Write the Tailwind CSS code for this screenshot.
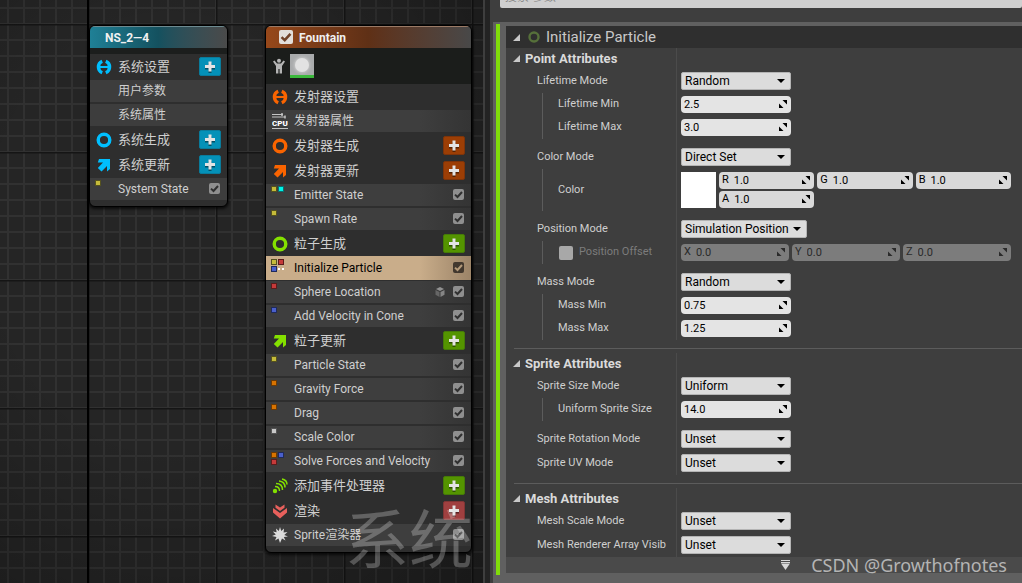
<!DOCTYPE html>
<html lang="zh-CN">
<head>
    <meta charset="UTF-8">
    <meta name="viewport" content="width=device-width, initial-scale=1.0">
    <title>Niagara - NS_2—4</title>
    <script src="https://cdn.jsdelivr.net/npm/@tailwindcss/browser@4"></script>
</head>

<body class="relative flex min-h-screen bg-[#232323] overflow-hidden font-[Roboto,'Noto_Sans_CJK_SC',sans-serif] text-xs text-[#cfcfcf]">

    <!-- Shared icons -->
    <svg class="hidden">
        <symbol id="check" viewBox="0 0 11 11"><path d="M2 5.6 4.5 8 9 3" fill="none" stroke="currentColor" stroke-width="2"/></symbol>
        <symbol id="plus" viewBox="0 0 12 12"><path d="M6 2v10M1 7h10" stroke="#000" stroke-opacity=".45" stroke-width="3"/><path d="M6 .5v10M1 5.5h10" stroke="#e4e4e4" stroke-width="3"/></symbol>
        <symbol id="settings" viewBox="0 0 16 16"><g fill="none" stroke="currentColor"><path d="M6.2 2.3A6.2 6.2 0 0 0 6.2 13.7M9.8 2.3A6.2 6.2 0 0 1 9.8 13.7" stroke-width="3.4"/><path d="M3 8h10" stroke-width="2"/></g></symbol>
        <symbol id="ring" viewBox="0 0 16 16"><circle cx="8" cy="8" r="5.8" fill="none" stroke="currentColor" stroke-width="3.4"/></symbol>
        <symbol id="arrow" viewBox="0 0 16 16"><path d="M3 2h11v10l-3 2.5V9L5.5 14.5 1.8 11 7 5.6H1.8z" fill="currentColor"/></symbol>
        <symbol id="caret" viewBox="0 0 8 4"><path d="M0 0h8L4 4z" fill="currentColor"/></symbol>
        <symbol id="spin" viewBox="0 0 9 9"><path d="M3.500 0H8v4.500zM0 3.500V8h4.500z" fill="currentColor"/></symbol>
        <symbol id="fold" viewBox="0 0 8 8"><path d="M8 0v8H0z" fill="currentColor"/></symbol>
    </svg>

    <!-- Graph canvas -->
    <main class="relative w-[483px] shrink-0 bg-[#252525] overflow-hidden">
        <svg class="absolute inset-0 w-full h-full">
            <defs>
                <pattern id="minor" width="16" height="16" patternUnits="userSpaceOnUse"><path d="M8 0v16M0 8h16" stroke="#313131" stroke-width="2"/></pattern>
                <pattern id="major" x="88" y="24" width="128" height="128" patternUnits="userSpaceOnUse"><path d="M0 0v128M0 0h128" stroke="#151515" stroke-width="3"/></pattern>
                <radialGradient id="vignette" cx=".35" cy=".4" r=".9"><stop offset=".4" stop-color="#000" stop-opacity="0"/><stop offset="1" stop-color="#000" stop-opacity=".35"/></radialGradient>
            </defs>
            <rect width="100%" height="100%" fill="url(#minor)"/>
            <rect width="100%" height="100%" fill="url(#major)"/>
            <rect x="87" width="2" height="100%" fill="#000"/>
            <rect width="100%" height="100%" fill="url(#vignette)"/>
        </svg>

        <!-- System node -->
        <section class="absolute left-[89px] top-[25px] w-[139px] rounded-md border border-black bg-[#2e2e2e] shadow-[0_1px_3px_1px_rgba(0,0,0,0.7)] overflow-hidden">
            <h2 class="h-[22px] pl-[15px] pt-px border-t border-[#6d8a90] bg-linear-to-r from-[#1f8096] via-[#14515f] to-[#4a4a4a] text-xs leading-5 font-bold text-[#f0f0f0]">NS_2—4</h2>
            <div class="h-[6px] bg-[#1c1e1d]"></div>
            <div class="flex h-[25px] items-center gap-[6px] px-[6px]">
                <svg class="size-4 text-[#00bfff]"><use href="#settings"/></svg>
                <span class="flex-1 text-[13px]">系统设置</span>
                <button aria-label="添加系统设置" class="grid h-[19px] w-[22px] place-items-center rounded-xs border border-[#0a7b9b] bg-[#0491b8]"><svg class="size-3"><use href="#plus"/></svg></button>
            </div>
            <div class="flex h-6 items-center border-y border-[#2e2e2e] bg-[#3d3d3d] pl-7">用户参数</div>
            <div class="flex h-6 items-center border-y border-[#2e2e2e] bg-[#3d3d3d] pl-7">系统属性</div>
            <div class="flex h-[25px] items-center gap-[6px] px-[6px]">
                <svg class="size-4 text-[#00bfff]"><use href="#ring"/></svg>
                <span class="flex-1 text-[13px]">系统生成</span>
                <button aria-label="添加系统生成" class="grid h-[19px] w-[22px] place-items-center rounded-xs border border-[#0a7b9b] bg-[#0491b8]"><svg class="size-3"><use href="#plus"/></svg></button>
            </div>
            <div class="flex h-[25px] items-center gap-[6px] px-[6px]">
                <svg class="size-4 text-[#00bfff]"><use href="#arrow"/></svg>
                <span class="flex-1 text-[13px]">系统更新</span>
                <button aria-label="添加系统更新" class="grid h-[19px] w-[22px] place-items-center rounded-xs border border-[#0a7b9b] bg-[#0491b8]"><svg class="size-3"><use href="#plus"/></svg></button>
            </div>
            <div class="flex h-6 items-center border-y border-[#2e2e2e] bg-[#3d3d3d] pr-[7px]">
                <span class="w-7 self-start pl-[5px] pt-[2px]"><i class="block size-[6px] border border-[#55521f] bg-[#c5bb3a]"></i></span>
                <label for="m_system" class="flex-1">System State</label>
                <span class="mb-px grid size-[11px]"><input id="m_system" type="checkbox" checked class="peer col-start-1 row-start-1 size-[11px] appearance-none rounded-xs bg-[#8f8f8f]"><svg class="pointer-events-none invisible col-start-1 row-start-1 size-[11px] text-[#303030] peer-checked:visible"><use href="#check"/></svg></span>
            </div>
            <div class="h-[5px]"></div>
        </section>

        <!-- Emitter node -->
        <section class="absolute left-[265px] top-[25px] w-[207px] rounded-md border border-black bg-[#2e2e2e] shadow-[0_1px_3px_1px_rgba(0,0,0,0.7)] overflow-hidden">
            <h2 class="flex h-[22px] items-center gap-[6px] border-t border-[#9a7a66] bg-linear-to-r from-[#97481a] via-[#5f3016] to-[#484848] pl-[13px] text-xs font-bold text-[#f0f0f0]">
                <span class="mb-px grid size-[14px]"><input id="m_fountain" type="checkbox" checked class="peer col-start-1 row-start-1 size-[14px] appearance-none rounded-xs bg-[#e2dedb]"><svg class="pointer-events-none invisible col-start-1 row-start-1 size-[14px] text-[#70422a] peer-checked:visible"><use href="#check"/></svg></span>
                <label for="m_fountain">Fountain</label>
            </h2>
            <div class="flex h-9 items-center gap-1 bg-[#1b1d1b] pl-[6px]">
                <svg class="h-4 w-[14px]" viewBox="0 0 14 16"><circle cx="7" cy="2.8" r="2" fill="#b4b4b4"/><path d="M2.500 2.500 5 5.500h4l2.500-3 1.500 1L10 8v7.500H7.600V11H6.400v4.500H4V8L1 3.500z" fill="#b4b4b4"/></svg>
                <div class="grid size-6 place-items-center border-b-[3px] border-[#3cb93c] bg-[#a9abac]"><i class="size-[14px] rounded-full bg-[#e2e2e2] shadow-[0_0_3px_1px_#c8c8c8]"></i></div>
            </div>
            <div class="flex h-[25px] items-center gap-[6px] px-[6px]">
                <svg class="size-4 text-[#fa6400]"><use href="#settings"/></svg>
                <span class="flex-1 text-[13px]">发射器设置</span>
            </div>
            <div class="flex h-6 items-center gap-[6px] border-y border-[#2e2e2e] bg-linear-to-r from-[#3e3e3e] from-75% to-[#343434] pl-[6px]">
                <svg class="size-4" viewBox="0 0 16 16"><path d="M0 1.500h11M0 4h13M0 15.500h16" stroke="#c4c4c4"/><path d="M10 0v3M13 2.500v3" stroke="#c4c4c4" stroke-width="1.500"/><text x="8" y="13" text-anchor="middle" font-size="8" font-weight="900" fill="#fff">CPU</text></svg>
                <span>发射器属性</span>
            </div>
            <div class="flex h-[25px] items-center gap-[6px] px-[6px]">
                <svg class="size-4 text-[#fa6400]"><use href="#ring"/></svg>
                <span class="flex-1 text-[13px]">发射器生成</span>
                <button aria-label="添加发射器生成" class="grid h-[19px] w-[22px] place-items-center rounded-xs border border-[#7d340a] bg-[#9c3e05]"><svg class="size-3"><use href="#plus"/></svg></button>
            </div>
            <div class="flex h-[25px] items-center gap-[6px] px-[6px]">
                <svg class="size-4 text-[#fa6400]"><use href="#arrow"/></svg>
                <span class="flex-1 text-[13px]">发射器更新</span>
                <button aria-label="添加发射器更新" class="grid h-[19px] w-[22px] place-items-center rounded-xs border border-[#7d340a] bg-[#9c3e05]"><svg class="size-3"><use href="#plus"/></svg></button>
            </div>
            <div class="flex h-6 items-center border-y border-[#2e2e2e] bg-linear-to-r from-[#3e3e3e] from-75% to-[#343434] pr-[7px]">
                <span class="flex w-7 gap-px self-start pl-[5px] pt-[2px]"><i class="size-[6px] border border-[#55521f] bg-[#c5bb3a]"></i><i class="size-[6px] border border-[#0a7070] bg-[#00f5e8]"></i></span>
                <label for="m_emitter" class="flex-1">Emitter State</label>
                <span class="mb-px grid size-[11px]"><input id="m_emitter" type="checkbox" checked class="peer col-start-1 row-start-1 size-[11px] appearance-none rounded-xs bg-[#8f8f8f]"><svg class="pointer-events-none invisible col-start-1 row-start-1 size-[11px] text-[#303030] peer-checked:visible"><use href="#check"/></svg></span>
            </div>
            <div class="flex h-6 items-center border-y border-[#2e2e2e] bg-linear-to-r from-[#3e3e3e] from-75% to-[#343434] pr-[7px]">
                <span class="w-7 self-start pl-[5px] pt-[2px]"><i class="block size-[6px] border border-[#55521f] bg-[#c5bb3a]"></i></span>
                <label for="m_spawn" class="flex-1">Spawn Rate</label>
                <span class="mb-px grid size-[11px]"><input id="m_spawn" type="checkbox" checked class="peer col-start-1 row-start-1 size-[11px] appearance-none rounded-xs bg-[#8f8f8f]"><svg class="pointer-events-none invisible col-start-1 row-start-1 size-[11px] text-[#303030] peer-checked:visible"><use href="#check"/></svg></span>
            </div>
            <div class="flex h-[25px] items-center gap-[6px] px-[6px]">
                <svg class="size-4 text-[#84e000]"><use href="#ring"/></svg>
                <span class="flex-1 text-[13px]">粒子生成</span>
                <button aria-label="添加粒子生成" class="grid h-[19px] w-[22px] place-items-center rounded-xs border border-[#457a08] bg-[#549400]"><svg class="size-3"><use href="#plus"/></svg></button>
            </div>
            <div class="flex h-6 items-center bg-linear-to-r from-[#c9ad8a] from-75% to-[#9c8468] pr-[7px] text-black">
                <span class="grid w-7 grid-cols-[6px_6px] gap-px self-start pl-[5px] pt-[3px]">
                    <i class="size-[6px] border border-[#55521f] bg-[#c5bb3a]"></i><i class="size-[6px] border border-[#5c1c1c] bg-[#c53a3a]"></i>
                    <i class="size-[6px] border border-[#1f2a5c] bg-[#4a60cc]"></i><i class="h-[2px] self-center border-t-2 border-dotted border-white"></i>
                </span>
                <label for="m_init" class="flex-1">Initialize Particle</label>
                <span class="mb-px grid size-[11px]"><input id="m_init" type="checkbox" checked class="peer col-start-1 row-start-1 size-[11px] appearance-none rounded-xs bg-[#42382e]"><svg class="pointer-events-none invisible col-start-1 row-start-1 size-[11px] text-[#b49a7a] peer-checked:visible"><use href="#check"/></svg></span>
            </div>
            <div class="flex h-6 items-center border-y border-[#2e2e2e] bg-linear-to-r from-[#3e3e3e] from-75% to-[#343434] pr-[7px]">
                <span class="w-7 self-start pl-[5px] pt-[2px]"><i class="block size-[6px] border border-[#5c1c1c] bg-[#c53a3a]"></i></span>
                <label for="m_sphere" class="flex-1">Sphere Location</label>
                <svg class="mr-2 size-[10px]" viewBox="0 0 10 10"><path d="M5 0l4 2-4 2-4-2z" fill="#929292"/><path d="M.5 3l4 2v5l-4-2.200z" fill="#666"/><path d="M9.500 3l-4 2v5l4-2.200z" fill="#858585"/></svg>
                <span class="mb-px grid size-[11px]"><input id="m_sphere" type="checkbox" checked class="peer col-start-1 row-start-1 size-[11px] appearance-none rounded-xs bg-[#8f8f8f]"><svg class="pointer-events-none invisible col-start-1 row-start-1 size-[11px] text-[#303030] peer-checked:visible"><use href="#check"/></svg></span>
            </div>
            <div class="flex h-6 items-center border-y border-[#2e2e2e] bg-linear-to-r from-[#3e3e3e] from-75% to-[#343434] pr-[7px]">
                <span class="w-7 self-start pl-[5px] pt-[2px]"><i class="block size-[6px] border border-[#1f2a5c] bg-[#4a60cc]"></i></span>
                <label for="m_velocity" class="flex-1">Add Velocity in Cone</label>
                <span class="mb-px grid size-[11px]"><input id="m_velocity" type="checkbox" checked class="peer col-start-1 row-start-1 size-[11px] appearance-none rounded-xs bg-[#8f8f8f]"><svg class="pointer-events-none invisible col-start-1 row-start-1 size-[11px] text-[#303030] peer-checked:visible"><use href="#check"/></svg></span>
            </div>
            <div class="flex h-[25px] items-center gap-[6px] px-[6px]">
                <svg class="size-4 text-[#84e000]"><use href="#arrow"/></svg>
                <span class="flex-1 text-[13px]">粒子更新</span>
                <button aria-label="添加粒子更新" class="grid h-[19px] w-[22px] place-items-center rounded-xs border border-[#457a08] bg-[#549400]"><svg class="size-3"><use href="#plus"/></svg></button>
            </div>
            <div class="flex h-6 items-center border-y border-[#2e2e2e] bg-linear-to-r from-[#3e3e3e] from-75% to-[#343434] pr-[7px]">
                <span class="w-7 self-start pl-[5px] pt-[2px]"><i class="block size-[6px] border border-[#55521f] bg-[#c5bb3a]"></i></span>
                <label for="m_particle" class="flex-1">Particle State</label>
                <span class="mb-px grid size-[11px]"><input id="m_particle" type="checkbox" checked class="peer col-start-1 row-start-1 size-[11px] appearance-none rounded-xs bg-[#8f8f8f]"><svg class="pointer-events-none invisible col-start-1 row-start-1 size-[11px] text-[#303030] peer-checked:visible"><use href="#check"/></svg></span>
            </div>
            <div class="flex h-6 items-center border-y border-[#2e2e2e] bg-linear-to-r from-[#3e3e3e] from-75% to-[#343434] pr-[7px]">
                <span class="w-7 self-start pl-[5px] pt-[2px]"><i class="block size-[6px] border border-[#6b3a05] bg-[#d87300]"></i></span>
                <label for="m_gravity" class="flex-1">Gravity Force</label>
                <span class="mb-px grid size-[11px]"><input id="m_gravity" type="checkbox" checked class="peer col-start-1 row-start-1 size-[11px] appearance-none rounded-xs bg-[#8f8f8f]"><svg class="pointer-events-none invisible col-start-1 row-start-1 size-[11px] text-[#303030] peer-checked:visible"><use href="#check"/></svg></span>
            </div>
            <div class="flex h-6 items-center border-y border-[#2e2e2e] bg-linear-to-r from-[#3e3e3e] from-75% to-[#343434] pr-[7px]">
                <span class="w-7 self-start pl-[5px] pt-[2px]"><i class="block size-[6px] border border-[#6b3a05] bg-[#d87300]"></i></span>
                <label for="m_drag" class="flex-1">Drag</label>
                <span class="mb-px grid size-[11px]"><input id="m_drag" type="checkbox" checked class="peer col-start-1 row-start-1 size-[11px] appearance-none rounded-xs bg-[#8f8f8f]"><svg class="pointer-events-none invisible col-start-1 row-start-1 size-[11px] text-[#303030] peer-checked:visible"><use href="#check"/></svg></span>
            </div>
            <div class="flex h-6 items-center border-y border-[#2e2e2e] bg-linear-to-r from-[#3e3e3e] from-75% to-[#343434] pr-[7px]">
                <span class="w-7 self-start pl-[5px] pt-[2px]"><i class="block size-[6px] border border-[#555] bg-[#c8c8c8]"></i></span>
                <label for="m_scale" class="flex-1">Scale Color</label>
                <span class="mb-px grid size-[11px]"><input id="m_scale" type="checkbox" checked class="peer col-start-1 row-start-1 size-[11px] appearance-none rounded-xs bg-[#8f8f8f]"><svg class="pointer-events-none invisible col-start-1 row-start-1 size-[11px] text-[#303030] peer-checked:visible"><use href="#check"/></svg></span>
            </div>
            <div class="flex h-6 items-center border-y border-[#2e2e2e] bg-linear-to-r from-[#3e3e3e] from-75% to-[#343434] pr-[7px]">
                <span class="grid w-7 grid-cols-[6px_6px] gap-px self-start pl-[5px] pt-[2px]">
                    <i class="size-[6px] border border-[#6b3a05] bg-[#d87300]"></i><i class="size-[6px] border border-[#1f2a5c] bg-[#4a60cc]"></i>
                    <i class="size-[6px] border border-[#5c1c1c] bg-[#c53a3a]"></i>
                </span>
                <label for="m_solve" class="flex-1">Solve Forces and Velocity</label>
                <span class="mb-px grid size-[11px]"><input id="m_solve" type="checkbox" checked class="peer col-start-1 row-start-1 size-[11px] appearance-none rounded-xs bg-[#8f8f8f]"><svg class="pointer-events-none invisible col-start-1 row-start-1 size-[11px] text-[#303030] peer-checked:visible"><use href="#check"/></svg></span>
            </div>
            <div class="flex h-[25px] items-center gap-[6px] px-[6px]">
                <svg class="size-4" viewBox="0 0 16 16"><circle cx="3" cy="13" r="2.200" fill="#84e000"/><path d="M3 8.500Q7.500 8.500 7.500 13M4 5.500Q10.500 5.500 10.500 12M7 3Q13 3.500 13 9.500M10 1Q15 2 15 6.500" fill="none" stroke="#84e000" stroke-width="1.500"/></svg>
                <span class="flex-1 text-[13px]">添加事件处理器</span>
                <button aria-label="添加事件处理器" class="grid h-[19px] w-[22px] place-items-center rounded-xs border border-[#457a08] bg-[#549400]"><svg class="size-3"><use href="#plus"/></svg></button>
            </div>
            <div class="flex h-[25px] items-center gap-[6px] px-[6px]">
                <svg class="size-4" viewBox="0 0 16 16"><path d="M1 5l7 5 7-5v4.500L8 15.500 1 9.500zM3.500 1.500 8 4.500l4.500-3v3.200L8 8 3.500 4.700z" fill="#e8605c"/></svg>
                <span class="flex-1 text-[13px]">渲染</span>
                <button aria-label="添加渲染" class="grid h-[19px] w-[22px] place-items-center rounded-xs border border-[#803535] bg-[#a04040]"><svg class="size-3"><use href="#plus"/></svg></button>
            </div>
            <div class="flex h-6 items-center gap-[6px] border-y border-[#2e2e2e] bg-linear-to-r from-[#3e3e3e] from-75% to-[#343434] pl-[6px] pr-[7px]">
                <svg class="size-4" viewBox="0 0 16 16"><path d="M8 0l1.300 4L12 1.500l-.4 4L15.500 5l-3.200 3 3.700 1.500-4.200.5 1.700 3.500-3.500-2L8 16l-1.500-4.500-3.500 2L4.500 10 0 9l3.800-1.500L.8 4.500l3.800.8L4 1.500 6.800 4z" fill="#dcdcdc"/></svg>
                <label for="m_sprite" class="flex-1">Sprite渲染器</label>
                <span class="mb-px grid size-[11px]"><input id="m_sprite" type="checkbox" checked class="peer col-start-1 row-start-1 size-[11px] appearance-none rounded-xs bg-[#8f8f8f]"><svg class="pointer-events-none invisible col-start-1 row-start-1 size-[11px] text-[#303030] peer-checked:visible"><use href="#check"/></svg></span>
            </div>
            <div class="h-[5px]"></div>
        </section>

        <!-- Canvas caption -->
        <div class="pointer-events-none absolute right-[10px] bottom-[9px] text-[64px] leading-none text-white/25">系统</div>
    </main>

    <!-- Details panel -->
    <aside class="flex min-w-0 flex-1 flex-col border-l-2 border-[#3e3e3e]">
        <div class="ml-[5px] flex flex-1 flex-col bg-[#3e3e3e]">
            <div class="flex h-[22px] items-end overflow-hidden pl-[10px] pb-[14px]">
                <input type="search" aria-label="搜索参数" placeholder="搜索 参数" class="h-[22px] w-full shrink-0 rounded-xs bg-[#cfcfcf] px-[5px] text-xs italic leading-4 placeholder:text-[#8a8a8a]">
            </div>
            <div class="ml-[3px] flex flex-1 items-start gap-[6px] bg-[#606060] pt-[2px] pl-[3px]">
                <div class="w-1 self-stretch mb-2 bg-[#80dc0a]"></div>
                <div class="my-[2px] min-w-0 flex-1 bg-[#3e3e3e] text-[11px]">
                    <h1 class="flex h-[22px] items-center bg-[#2f2f2f] pl-[7px] text-[15px] leading-[22px] text-[#c8c8c8]">
                        <svg class="size-[7px] text-[#c8c8c8]"><use href="#fold"/></svg>
                        <svg class="ml-2 mr-[6px] size-3" viewBox="0 0 12 12"><circle cx="6" cy="6" r="4.500" fill="none" stroke="#56703a" stroke-width="2.400"/></svg>
                        Initialize Particle
                    </h1>

                    <!-- Point Attributes -->
                    <section>
                        <div class="grid grid-cols-[170px_1fr]">
                            <h2 class="flex h-[21px] items-center gap-[5px] pl-[7px] text-[13px] font-bold text-[#dadada]"><svg class="size-[7px] text-[#c8c8c8]"><use href="#fold"/></svg>Point Attributes</h2>
                            <div class="border-l border-[#4b4b4b]"></div>
                        </div>
                        <div class="grid h-6 grid-cols-[170px_1fr]">
                            <label for="lifetime_mode" class="self-center pl-[31px]">Lifetime Mode</label>
                            <div class="flex items-center border-l border-[#4b4b4b] pl-1">
                                <div class="grid w-[110px] items-center">
                                    <select id="lifetime_mode" class="col-start-1 row-start-1 h-[18px] w-full appearance-none rounded-xs border border-[#b4b4b4] bg-[#dcdcdc] pl-[3px] text-xs leading-4 text-black"><option>Random</option></select>
                                    <svg class="pointer-events-none col-start-1 row-start-1 mr-[6px] h-1 w-2 justify-self-end text-black"><use href="#caret"/></svg>
                                </div>
                            </div>
                        </div>
                        <div class="grid h-[23px] grid-cols-[170px_1fr]">
                            <label for="lifetime_min" class="ml-9 flex items-center border-l border-[#5c5c5c] pl-[15px]">Lifetime Min</label>
                            <div class="flex items-center border-l border-[#4b4b4b] pl-1">
                                <div class="flex h-[17px] w-[110px] items-center rounded-sm bg-[#e4e4e4] px-[3px] text-black">
                                    <input id="lifetime_min" value="2.5" class="min-w-0 flex-1 leading-4 outline-none"><svg class="size-[9px]"><use href="#spin"/></svg>
                                </div>
                            </div>
                        </div>
                        <div class="grid h-[23px] grid-cols-[170px_1fr]">
                            <label for="lifetime_max" class="ml-9 flex items-center border-l border-[#5c5c5c] pl-[15px]">Lifetime Max</label>
                            <div class="flex items-center border-l border-[#4b4b4b] pl-1">
                                <div class="flex h-[17px] w-[110px] items-center rounded-sm bg-[#e4e4e4] px-[3px] text-black">
                                    <input id="lifetime_max" value="3.0" class="min-w-0 flex-1 leading-4 outline-none"><svg class="size-[9px]"><use href="#spin"/></svg>
                                </div>
                            </div>
                        </div>
                        <div class="ml-[170px] h-[6px] border-l border-[#4b4b4b]"></div>
                        <div class="grid h-6 grid-cols-[170px_1fr]">
                            <label for="color_mode" class="self-center pl-[31px]">Color Mode</label>
                            <div class="flex items-center border-l border-[#4b4b4b] pl-1">
                                <div class="grid w-[110px] items-center">
                                    <select id="color_mode" class="col-start-1 row-start-1 h-[18px] w-full appearance-none rounded-xs border border-[#b4b4b4] bg-[#dcdcdc] pl-[3px] text-xs leading-4 text-black"><option>Direct Set</option></select>
                                    <svg class="pointer-events-none col-start-1 row-start-1 mr-[6px] h-1 w-2 justify-self-end text-black"><use href="#caret"/></svg>
                                </div>
                            </div>
                        </div>
                        <div class="grid h-[42px] grid-cols-[170px_1fr]">
                            <span class="ml-9 flex items-center border-l border-[#5c5c5c] pl-[15px]">Color</span>
                            <div class="flex items-center gap-[3px] border-l border-[#4b4b4b] pl-1 pr-[11px]">
                                <button aria-label="Color" class="h-9 w-[35px] bg-white"></button>
                                <div class="grid flex-1 grid-cols-3 gap-x-[3px] gap-y-[2px] text-black">
                                    <div class="flex h-[17px] items-center gap-[5px] rounded-sm bg-[#d9d9d9] px-[3px]"><label for="color_r">R</label><input id="color_r" value="1.0" class="min-w-0 flex-1 leading-4 outline-none"><svg class="size-[9px]"><use href="#spin"/></svg></div>
                                    <div class="flex h-[17px] items-center gap-[5px] rounded-sm bg-[#d9d9d9] px-[3px]"><label for="color_g">G</label><input id="color_g" value="1.0" class="min-w-0 flex-1 leading-4 outline-none"><svg class="size-[9px]"><use href="#spin"/></svg></div>
                                    <div class="flex h-[17px] items-center gap-[5px] rounded-sm bg-[#d9d9d9] px-[3px]"><label for="color_b">B</label><input id="color_b" value="1.0" class="min-w-0 flex-1 leading-4 outline-none"><svg class="size-[9px]"><use href="#spin"/></svg></div>
                                    <div class="flex h-[17px] items-center gap-[5px] rounded-sm bg-[#d9d9d9] px-[3px]"><label for="color_a">A</label><input id="color_a" value="1.0" class="min-w-0 flex-1 leading-4 outline-none"><svg class="size-[9px]"><use href="#spin"/></svg></div>
                                </div>
                            </div>
                        </div>
                        <div class="ml-[170px] h-[6px] border-l border-[#4b4b4b]"></div>
                        <div class="grid h-6 grid-cols-[170px_1fr]">
                            <label for="position_mode" class="self-center pl-[31px]">Position Mode</label>
                            <div class="flex items-center border-l border-[#4b4b4b] pl-1">
                                <div class="grid w-[126px] items-center">
                                    <select id="position_mode" class="col-start-1 row-start-1 h-[18px] w-full appearance-none rounded-xs border border-[#b4b4b4] bg-[#dcdcdc] pl-[3px] text-xs leading-4 text-black"><option>Simulation Position</option></select>
                                    <svg class="pointer-events-none col-start-1 row-start-1 mr-[6px] h-1 w-2 justify-self-end text-black"><use href="#caret"/></svg>
                                </div>
                            </div>
                        </div>
                        <div class="grid h-[23px] grid-cols-[170px_1fr]">
                            <div class="ml-9 flex items-center gap-[6px] border-l border-[#5c5c5c] pl-4 text-[#7c7c7c]">
                                <input id="position_offset" type="checkbox" class="size-[14px] appearance-none rounded-xs bg-[#a8a8a8]"><label for="position_offset">Position Offset</label>
                            </div>
                            <div class="grid grid-cols-3 items-center gap-[3px] border-l border-[#4b4b4b] pl-1 pr-[11px] text-[#2a2a2a]">
                                <div class="flex h-[17px] items-center gap-[5px] rounded-sm bg-[#7c7c7c] px-[3px]"><label for="offset_x">X</label><input id="offset_x" value="0.0" disabled class="min-w-0 flex-1 leading-4"><svg class="size-[9px]"><use href="#spin"/></svg></div>
                                <div class="flex h-[17px] items-center gap-[5px] rounded-sm bg-[#7c7c7c] px-[3px]"><label for="offset_y">Y</label><input id="offset_y" value="0.0" disabled class="min-w-0 flex-1 leading-4"><svg class="size-[9px]"><use href="#spin"/></svg></div>
                                <div class="flex h-[17px] items-center gap-[5px] rounded-sm bg-[#7c7c7c] px-[3px]"><label for="offset_z">Z</label><input id="offset_z" value="0.0" disabled class="min-w-0 flex-1 leading-4"><svg class="size-[9px]"><use href="#spin"/></svg></div>
                            </div>
                        </div>
                        <div class="ml-[170px] h-[6px] border-l border-[#4b4b4b]"></div>
                        <div class="grid h-6 grid-cols-[170px_1fr]">
                            <label for="mass_mode" class="self-center pl-[31px]">Mass Mode</label>
                            <div class="flex items-center border-l border-[#4b4b4b] pl-1">
                                <div class="grid w-[110px] items-center">
                                    <select id="mass_mode" class="col-start-1 row-start-1 h-[18px] w-full appearance-none rounded-xs border border-[#b4b4b4] bg-[#dcdcdc] pl-[3px] text-xs leading-4 text-black"><option>Random</option></select>
                                    <svg class="pointer-events-none col-start-1 row-start-1 mr-[6px] h-1 w-2 justify-self-end text-black"><use href="#caret"/></svg>
                                </div>
                            </div>
                        </div>
                        <div class="grid h-[23px] grid-cols-[170px_1fr]">
                            <label for="mass_min" class="ml-9 flex items-center border-l border-[#5c5c5c] pl-[15px]">Mass Min</label>
                            <div class="flex items-center border-l border-[#4b4b4b] pl-1">
                                <div class="flex h-[17px] w-[110px] items-center rounded-sm bg-[#e4e4e4] px-[3px] text-black">
                                    <input id="mass_min" value="0.75" class="min-w-0 flex-1 leading-4 outline-none"><svg class="size-[9px]"><use href="#spin"/></svg>
                                </div>
                            </div>
                        </div>
                        <div class="grid h-[23px] grid-cols-[170px_1fr]">
                            <label for="mass_max" class="ml-9 flex items-center border-l border-[#5c5c5c] pl-[15px]">Mass Max</label>
                            <div class="flex items-center border-l border-[#4b4b4b] pl-1">
                                <div class="flex h-[17px] w-[110px] items-center rounded-sm bg-[#e4e4e4] px-[3px] text-black">
                                    <input id="mass_max" value="1.25" class="min-w-0 flex-1 leading-4 outline-none"><svg class="size-[9px]"><use href="#spin"/></svg>
                                </div>
                            </div>
                        </div>
                    </section>
                    <hr class="mt-2 mb-1 ml-2 border-[#5c5c5c]">

                    <!-- Sprite Attributes -->
                    <section>
                        <div class="grid grid-cols-[170px_1fr]">
                            <h2 class="flex h-[21px] items-center gap-[5px] pl-[7px] text-[13px] font-bold text-[#dadada]"><svg class="size-[7px] text-[#c8c8c8]"><use href="#fold"/></svg>Sprite Attributes</h2>
                            <div class="border-l border-[#4b4b4b]"></div>
                        </div>
                        <div class="grid h-6 grid-cols-[170px_1fr]">
                            <label for="sprite_size_mode" class="self-center pl-[31px]">Sprite Size Mode</label>
                            <div class="flex items-center border-l border-[#4b4b4b] pl-1">
                                <div class="grid w-[110px] items-center">
                                    <select id="sprite_size_mode" class="col-start-1 row-start-1 h-[18px] w-full appearance-none rounded-xs border border-[#b4b4b4] bg-[#dcdcdc] pl-[3px] text-xs leading-4 text-black"><option>Uniform</option></select>
                                    <svg class="pointer-events-none col-start-1 row-start-1 mr-[6px] h-1 w-2 justify-self-end text-black"><use href="#caret"/></svg>
                                </div>
                            </div>
                        </div>
                        <div class="grid h-[23px] grid-cols-[170px_1fr]">
                            <label for="sprite_size" class="ml-9 flex items-center border-l border-[#5c5c5c] pl-[15px]">Uniform Sprite Size</label>
                            <div class="flex items-center border-l border-[#4b4b4b] pl-1">
                                <div class="flex h-[17px] w-[110px] items-center rounded-sm bg-[#e4e4e4] px-[3px] text-black">
                                    <input id="sprite_size" value="14.0" class="min-w-0 flex-1 leading-4 outline-none"><svg class="size-[9px]"><use href="#spin"/></svg>
                                </div>
                            </div>
                        </div>
                        <div class="ml-[170px] h-[6px] border-l border-[#4b4b4b]"></div>
                        <div class="grid h-6 grid-cols-[170px_1fr]">
                            <label for="sprite_rotation" class="self-center pl-[31px]">Sprite Rotation Mode</label>
                            <div class="flex items-center border-l border-[#4b4b4b] pl-1">
                                <div class="grid w-[110px] items-center">
                                    <select id="sprite_rotation" class="col-start-1 row-start-1 h-[18px] w-full appearance-none rounded-xs border border-[#b4b4b4] bg-[#dcdcdc] pl-[3px] text-xs leading-4 text-black"><option>Unset</option></select>
                                    <svg class="pointer-events-none col-start-1 row-start-1 mr-[6px] h-1 w-2 justify-self-end text-black"><use href="#caret"/></svg>
                                </div>
                            </div>
                        </div>
                        <div class="grid h-6 grid-cols-[170px_1fr]">
                            <label for="sprite_uv" class="self-center pl-[31px]">Sprite UV Mode</label>
                            <div class="flex items-center border-l border-[#4b4b4b] pl-1">
                                <div class="grid w-[110px] items-center">
                                    <select id="sprite_uv" class="col-start-1 row-start-1 h-[18px] w-full appearance-none rounded-xs border border-[#b4b4b4] bg-[#dcdcdc] pl-[3px] text-xs leading-4 text-black"><option>Unset</option></select>
                                    <svg class="pointer-events-none col-start-1 row-start-1 mr-[6px] h-1 w-2 justify-self-end text-black"><use href="#caret"/></svg>
                                </div>
                            </div>
                        </div>
                    </section>
                    <hr class="mt-2 mb-1 ml-2 border-[#5c5c5c]">

                    <!-- Mesh Attributes -->
                    <section>
                        <div class="grid grid-cols-[170px_1fr]">
                            <h2 class="flex h-[21px] items-center gap-[5px] pl-[7px] text-[13px] font-bold text-[#dadada]"><svg class="size-[7px] text-[#c8c8c8]"><use href="#fold"/></svg>Mesh Attributes</h2>
                            <div class="border-l border-[#4b4b4b]"></div>
                        </div>
                        <div class="grid h-6 grid-cols-[170px_1fr]">
                            <label for="mesh_scale" class="self-center pl-[31px]">Mesh Scale Mode</label>
                            <div class="flex items-center border-l border-[#4b4b4b] pl-1">
                                <div class="grid w-[110px] items-center">
                                    <select id="mesh_scale" class="col-start-1 row-start-1 h-[18px] w-full appearance-none rounded-xs border border-[#b4b4b4] bg-[#dcdcdc] pl-[3px] text-xs leading-4 text-black"><option>Unset</option></select>
                                    <svg class="pointer-events-none col-start-1 row-start-1 mr-[6px] h-1 w-2 justify-self-end text-black"><use href="#caret"/></svg>
                                </div>
                            </div>
                        </div>
                        <div class="grid h-6 grid-cols-[170px_1fr]">
                            <label for="mesh_array" class="self-center whitespace-nowrap pl-[31px]">Mesh Renderer Array Visib</label>
                            <div class="flex items-center border-l border-[#4b4b4b] pl-1">
                                <div class="grid w-[110px] items-center">
                                    <select id="mesh_array" class="col-start-1 row-start-1 h-[18px] w-full appearance-none rounded-xs border border-[#b4b4b4] bg-[#dcdcdc] pl-[3px] text-xs leading-4 text-black"><option>Unset</option></select>
                                    <svg class="pointer-events-none col-start-1 row-start-1 mr-[6px] h-1 w-2 justify-self-end text-black"><use href="#caret"/></svg>
                                </div>
                            </div>
                        </div>
                    </section>

                    <!-- Advanced rows toggle -->
                    <button aria-label="Show advanced" class="flex h-4 w-full items-center bg-[#4a4a4a] pl-[275px]">
                        <svg class="h-[10px] w-[9px]" viewBox="0 0 9 10"><path d="M0 .5h9M0 2.500h9" stroke="#d8d8d8"/><path d="M0 3.500h9L4.500 10z" fill="#d8d8d8"/></svg>
                    </button>
                </div>
            </div>
        </div>
    </aside>

    <div class="pointer-events-none absolute right-[15px] bottom-[6px] font-['Noto_Sans',sans-serif] text-lg leading-6 text-[#b4b4b4]">CSDN @Growthofnotes</div>
</body>
</html>
